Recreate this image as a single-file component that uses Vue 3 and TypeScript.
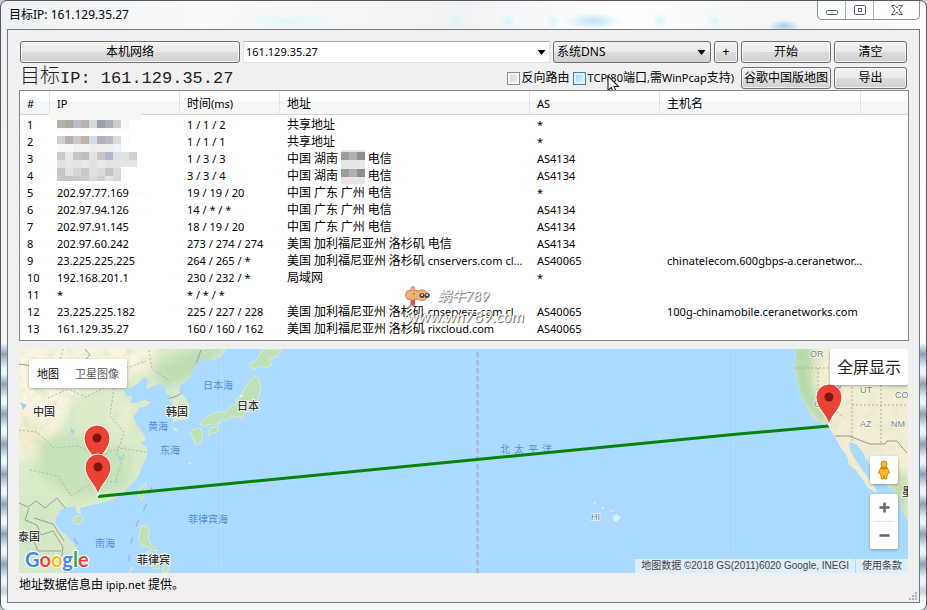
<script setup lang="ts">
import { ref } from 'vue'

interface Band { y: number; h: number; cells: string[] }
interface Hop { ip: string; time: string; address: string; as: string; host: string; mask?: Band[] }

const target = ref('161.129.35.27')
const dns = ref('系统DNS')
const reverse = ref(false)
const tcp = ref(false)

const columns = ['#', 'IP', '时间(ms)', '地址', 'AS', '主机名', '']

const masks: Band[][] = [
  [
    { y: 4, h: 8, cells: ['#b5b3ae', '#a9a8a1', '#bcbcc4', '#b6b4ae', '#d1dbe0', '#9f9fa1', '#a8adb8', '#cccccf', '#f0fafa'] },
    { y: 12, h: 5, cells: ['#fcfcfc', '#fbfbfb', '#fdfdfd', '#fbfbfb', '#fcfcfc', '#fbfbfb', '#fcfcfc', '#fdfdfd', '#fafefe'] },
  ],
  [
    { y: 3, h: 8, cells: ['#cfcfcf', '#b9b0ac', '#c7c7cf', '#bab5a8', '#d3dde5', '#b8b0ae', '#b8bac6', '#dadada', '#f5fcfc'] },
    { y: 11, h: 6, cells: ['#f9f9f9', '#f8f8f8', '#f0f0f0', '#f2f2f2', '#eeeeee', '#ededed', '#eeeeee', '#f3f3f3'] },
  ],
  [
    { y: 0, h: 2, cells: ['#f9f9f9', '#f8f8f8', '#f0f0f0', '#f2f2f2', '#eeeeee', '#ededed', '#eeeeee', '#f3f3f3'] },
    { y: 2, h: 8, cells: ['#c9c9c9', '#e6e8e8', '#c6c4c4', '#c3bfbe', '#e3e3e3', '#c6c6c8', '#b3b9cc', '#dde3e6', '#e0e2e4', '#cfcfcf'] },
    { y: 10, h: 7, cells: ['#e2e2e2', '#e6e6e6', '#e4e4e4', '#e8e8e8', '#e2e2e2', '#e8e8e8', '#e4e4e4', '#e5e5e5', '#e4e4e4', '#e6e6e6'] },
  ],
  [
    { y: 0, h: 1, cells: ['#e2e2e2', '#e6e6e6', '#e4e4e4', '#e8e8e8', '#e2e2e2', '#e8e8e8', '#e4e4e4', '#e5e5e5'] },
    { y: 1, h: 8, cells: ['#c4c4c6', '#e2e2e2', '#d6d6d8', '#c9c9cc', '#e0e0e2', '#dcdcdc', '#c5c5c7', '#dadada'] },
    { y: 9, h: 5, cells: ['#cacacc', '#c6c6c8', '#cacace', '#cdcdcf', '#dadadc', '#cfcfd1', '#e2e2e2', '#d6d6d6'] },
  ],
]

const hops: Hop[] = [
  { ip: '', time: '1 / 1 / 2', address: '共享地址', as: '*', host: '', mask: masks[0] },
  { ip: '', time: '1 / 1 / 1', address: '共享地址', as: '*', host: '', mask: masks[1] },
  { ip: '', time: '1 / 3 / 3', address: '中国 湖南 # 电信', as: 'AS4134', host: '', mask: masks[2] },
  { ip: '', time: '3 / 3 / 4', address: '中国 湖南 # 电信', as: 'AS4134', host: '', mask: masks[3] },
  { ip: '202.97.77.169', time: '19 / 19 / 20', address: '中国 广东 广州 电信', as: '*', host: '' },
  { ip: '202.97.94.126', time: '14 / * / *', address: '中国 广东 广州 电信', as: 'AS4134', host: '' },
  { ip: '202.97.91.145', time: '18 / 19 / 20', address: '中国 广东 广州 电信', as: 'AS4134', host: '' },
  { ip: '202.97.60.242', time: '273 / 274 / 274', address: '美国 加利福尼亚州 洛杉矶 电信', as: 'AS4134', host: '' },
  { ip: '23.225.225.225', time: '264 / 265 / *', address: '美国 加利福尼亚州 洛杉矶 cnservers.com cl...', as: 'AS40065', host: 'chinatelecom.600gbps-a.ceranetwor...' },
  { ip: '192.168.201.1', time: '230 / 232 / *', address: '局域网', as: '*', host: '' },
  { ip: '*', time: '* / * / *', address: '', as: '', host: '' },
  { ip: '23.225.225.182', time: '225 / 227 / 228', address: '美国 加利福尼亚州 洛杉矶 cnservers.com cl...', as: 'AS40065', host: '100g-chinamobile.ceranetworks.com' },
  { ip: '161.129.35.27', time: '160 / 160 / 162', address: '美国 加利福尼亚州 洛杉矶 rixcloud.com', as: 'AS40065', host: '' },
]

// Chinese runs are set one pixel larger than Latin runs; "#" stands for a masked name.
function runs(text: string): { text: string; kind: string }[] {
  return (text.match(/#|[\u4e00-\u9fff]+|[^\u4e00-\u9fff#]+/g) ?? []).map((t) => ({
    text: t,
    kind: t === '#' ? 'mask' : /[\u4e00-\u9fff]/.test(t) ? 'han' : 'latin',
  }))
}

const pins = [
  { x: 97, y: 467 },
  { x: 98, y: 496 },
  { x: 829, y: 426 },
]
</script>

<template>
  <div class="window">
    <header class="titlebar">
      <h1 class="title"><span class="han">目标</span>IP: 161.129.35.27</h1>
      <div class="caption-buttons">
        <button type="button" aria-label="最小化">
          <svg width="14" height="12" viewBox="0 0 14 12"><rect x="1.500" y="6.500" width="11" height="4" rx="1" fill="#fff" stroke="#555a66" /></svg>
        </button>
        <button type="button" aria-label="最大化">
          <svg width="14" height="12" viewBox="0 0 14 12"><rect x="1.500" y="1.500" width="11" height="9" rx="1" fill="#fff" stroke="#555a66" /><rect x="5.500" y="4.500" width="3" height="3" fill="#fff" stroke="#555a66" /></svg>
        </button>
        <button type="button" class="close" aria-label="关闭">
          <svg width="14" height="12" viewBox="0 0 14 12"><path d="M1.500 1.500h3.500l2 2.500 2-2.500h3.500l-3.500 4.500 3.500 4.500h-3.500l-2-2.500-2 2.500H1.500L5 6z" fill="#fff" stroke="#555a66" /></svg>
        </button>
      </div>
    </header>

    <main class="client">
      <form class="tools" @submit.prevent>
        <div class="bar">
          <button type="button" class="btn local">本机网络</button>
          <div class="combo">
            <input v-model="target" type="text" aria-label="目标地址" />
            <button type="button" aria-label="历史记录">
              <svg width="9" height="5" viewBox="0 0 9 5"><path d="M0.500 0h8L4.500 5z" fill="#000" /></svg>
            </button>
          </div>
          <div class="select">
            <select v-model="dns" aria-label="DNS">
              <option>系统DNS</option>
            </select>
            <svg class="select-arrow" width="9" height="5" viewBox="0 0 9 5"><path d="M0.500 0h8L4.500 5z" fill="#000" /></svg>
          </div>
          <button type="button" class="btn plus">+</button>
          <button type="submit" class="btn wide">开始</button>
          <button type="button" class="btn narrow">清空</button>
        </div>
        <div class="bar">
          <h2 class="heading"><span>目标</span>IP: 161.129.35.27</h2>
          <label class="check"><input v-model="reverse" type="checkbox" /><span class="han">反向路由</span></label>
          <label class="check hot">
            <input v-model="tcp" type="checkbox" />
            <span>TCP(80<span class="han">端口</span>,<span class="han">需</span>WinPcap<span class="han">支持</span>)</span>
            <svg class="cursor" width="14" height="20" viewBox="0 0 14 20"><path d="M1 1v14.500l3.300-3 2.400 5.500 2.700-1.100-2.400-5.400h4.500z" fill="#fff" stroke="#222" stroke-width="1.100" /></svg>
          </label>
          <button type="button" class="btn wide">谷歌中国版地图</button>
          <button type="button" class="btn narrow">导出</button>
        </div>
      </form>

      <section class="list">
        <table>
          <colgroup>
            <col class="c-no" /><col class="c-ip" /><col class="c-time" /><col class="c-address" /><col class="c-as" /><col class="c-host" /><col />
          </colgroup>
          <thead>
            <tr>
              <th v-for="(c, i) in columns" :key="i" scope="col"><span v-for="(r, k) in (c === '#' ? [{ text: '#', kind: 'latin' }] : runs(c))" :key="k" :class="r.kind">{{ r.text }}</span></th>
            </tr>
          </thead>
          <tbody>
            <tr v-for="(h, i) in hops" :key="i">
              <td>{{ i + 1 }}</td>
              <td>
                <svg v-if="h.mask" class="ip-mask" width="80" height="17" viewBox="0 0 80 17" shape-rendering="crispEdges">
                  <rect v-if="i === 0" x="-8" y="-4" width="92" height="8" fill="#f6f6f6" />
                  <template v-for="(b, n) in h.mask" :key="n">
                    <rect v-for="(c, k) in b.cells" :key="k" :x="k * 8" :y="b.y" width="8" :height="b.h" :fill="c" />
                  </template>
                </svg>
                <template v-else>{{ h.ip }}</template>
              </td>
              <td>{{ h.time }}</td>
              <td class="address"><template v-for="(r, k) in runs(h.address)" :key="k"><svg v-if="r.kind === 'mask'" class="name-mask" width="24" height="17" viewBox="0 0 24 17" shape-rendering="crispEdges"><rect width="24" height="17" fill="#e6e6e6" /><rect y="2" width="8" height="8" fill="#9d9d9f" /><rect x="8" y="2" width="8" height="8" fill="#b0b0b2" /><rect x="16" y="2" width="8" height="8" fill="#8e8e90" /></svg><span v-else :class="r.kind">{{ r.text }}</span></template></td>
              <td>{{ h.as }}</td>
              <td>{{ h.host }}</td>
              <td></td>
            </tr>
          </tbody>
        </table>
        <div class="watermark">
          <svg width="26" height="22" viewBox="0 0 26 22">
            <path d="M7 1q3-1 3 3v14q0 3-3 3t-2-4V4q0-2 2-3z" fill="#e9a3a3" />
            <path d="M6 15h4v4q0 2-2 2t-2-2z" fill="#dc5050" />
            <path d="M2 6q6-2 12 0 2-2 5-1l6 5-5 5q-4 2-7-1-6 2-11 0-3-4 0-8z" fill="#f5b070" stroke="#c98d60" />
            <circle cx="17" cy="10.500" r="2.500" fill="#444" /><circle cx="22" cy="10.500" r="2.500" fill="#444" />
            <circle cx="17" cy="10" r="1" fill="#fff" /><circle cx="22" cy="10" r="1" fill="#fff" /><circle cx="9" cy="9" r="1" fill="#a67b5b" />
          </svg>
          <span class="mark-name">蜗牛789</span>
          <span class="mark-site">www.wn789.com</span>
        </div>
      </section>

      <section class="map">
        <svg class="chart" viewBox="19 349 889 224" preserveAspectRatio="xMidYMid slice">
          <defs>
            <clipPath id="asia"><path d="M19 349H226L222 356 214 360 207 359 198 361 193 369 192 375 186 381 180 385 179 391 185 397 189 404 190 413 186 420 178 420 173 423 172 412 174 406 171 401 167 400 171 396 166 393 166 386 160 384 151 387 146 389 148 379 144 377 140 382 133 387 124 391 126 396 132 396 131 403 136 403 144 400 151 402 147 406 139 408 133 418 137 425 142 431 146 440 141 443 147 448 147 456 142 467 138 477 132 484 124 492 116 498 102 503 92 505 84 507 80 508 81 514 77 513 75 507 69 507 62 509 56 517 55 524 60 530 67 536 74 544 79 552 78 562 70 570 62 573H19z" /></clipPath>
            <clipPath id="america"><path d="M795 349L796 358 794 368 798 380 799 392 804 402 809 412 815 420 823 424 829 428 835 437 841 448 848 458 848 464 856 470 863 480 868 488 877 493 874 486 867 477 861 468 855 459 850 449 849 442 856 444 862 451 868 462 875 474 884 483 892 489 899 499 902 511 908 521V349z" /></clipPath>
            <filter id="soft" x="-20%" y="-20%" width="140%" height="140%"><feGaussianBlur stdDeviation="5" /></filter>
            <filter id="speckle" x="0" y="0" width="100%" height="100%">
              <feTurbulence type="fractalNoise" baseFrequency="0.09" numOctaves="3" seed="4" />
              <feColorMatrix values="0 0 0 0 .62  0 0 0 0 .79  0 0 0 0 .58  2.600 0 0 0 -1.250" />
            </filter>
          </defs>
          <rect x="-400" y="0" width="1800" height="900" fill="#aadaff" />

          <g clip-path="url(#asia)">
            <rect x="19" y="349" width="215" height="224" fill="#dcebca" />
            <g filter="url(#soft)">
              <path d="M0 330H160L150 368 110 385 78 392 60 425 45 452 0 465z" fill="#f9f3df" />
              <path d="M155 365l35-15 40-10-30 35-40 15z" fill="#bddcb2" />
              <path d="M38 440l30-6 30 8 35 10-8 38-50 8-34-20z" fill="#c5e2b8" />
              <path d="M19 500l35 0 10 30 14 40H19z" fill="#d3e8c6" />
              <path d="M110 395l25 12-8 26-20-6z" fill="#e9edd2" />
              <path d="M20 415l25 8-8 26-18 4z" fill="#f3ebc9" />
            </g>
            <rect x="19" y="349" width="215" height="224" filter="url(#speckle)" opacity=".65" />
            <g fill="none" stroke="#adb3a5" stroke-width="1" stroke-dasharray="2 2">
              <path d="M48 398l20-9 18 8 24-12 14-16 22-8" /><path d="M19 430l18 2 17 16 23-2 25 10 16-8 28 4" />
              <path d="M63 349l-4 15 12 10M114 388l-4 28 14 16-8 24" /><path d="M30 470l28 6 13 20 26-16 18 2 9-27" /><path d="M149 350l3 19 18 12" />
            </g>
            <g fill="none" stroke="#9aa095" stroke-width="1"><path d="M85 349l5 6-8 8-35 5-28-4M19 503l9 4 8-6 9 7 12-10 9 11" /><path d="M29 508l-4 12 12 5 4 10 12-4 10 16-2 15M34 518l19 6 11 17M19 535l14 4 5 12h23M167 399l10-3 7-5M201 350l-5 14" /></g>
            <path d="M20 402l7 3-4 5zM70 428l5 3-3 4zM118 455l5 3-4 3zM115 478l4 3-3 2z" fill="#9fd2f5" />
          </g>
          <g fill="#bfe0b4" stroke="#d8ebcc" stroke-width="1">
            <path d="M263 349l18 1-4 7-8 2 3 5-5 4-8-2-5 4-5-6 7-3 3-5z" />
            <path d="M254 376l4 2 3 8-2 10-4 14-6 3-2-4-5 9-9-2-6 5-5-3-3 6-7 0-7 2-6-2 9-8 9-4 9 0 4-5 6-3 1-6 5-4 5-9z" />
            <path d="M210 428l7-2 2 5-7 3-4 1z" /><path d="M194 429l6-1 3 5-2 9-5 4-3-8-3-5z" />
            <path d="M142 485l4-2-1 8-3 10-4-7z" /><path d="M74 517l6-2 4 4-6 6-5-2z" />
            <path d="M141 526l5-1 3 6-1 8 4 7 6 5-7-1-4-4-5 1-4-9 2-4z" />
            <path d="M148 551l5 3-2 5-4-3zM159 553l6 3-2 6-5-3zM152 562l8 2-2 5-6-1zM133 567l-6 6h3zM165 565l4 2-2 6-5-1z" />
          </g>
          <path d="M174 429l3 1M189 463l2 1M240 397l3-2" stroke="#e4f0df" stroke-width="2" />

          <g clip-path="url(#america)">
            <rect x="790" y="349" width="118" height="180" fill="#f2edd3" />
            <g filter="url(#soft)">
              <path d="M788 345h27l-4 38 10 20 10 20-12 2-24-32z" fill="#b4d8a9" />
              <path d="M871 345h37v45l-20-2z" fill="#d8e8c4" /><path d="M885 465l23 12v50l-14-22z" fill="#bfdeb0" />
            </g>
            <rect x="790" y="349" width="118" height="180" filter="url(#speckle)" opacity=".4" />
            <g fill="none" stroke="#b1ab9d" stroke-dasharray="2 2"><path d="M795 368h57v85M818 368v25l26 25M852 405h56M881 349v94M852 368h56" /></g>
            <path d="M835 436l14 0 21 8h15l2-3h10l10 12" fill="none" stroke="#98988c" />
          </g>
          <g fill="#d9edff"><path d="M592 503l4-1v2zM601 506l4 2-3 1zM610 510l5 1-4 1zM613 516l4-2 4 4-5 4-3-2z" /></g>

          <g fill="none" stroke="#a9b7d8" stroke-width="1.500" stroke-dasharray="7 11"><path d="M152 487q-6 20-14 35-10 22-9 50" /><path d="M74 538l6 10" /></g>
          <path d="M477.500 0V900" stroke="#aebdd6" stroke-width="3" stroke-dasharray="5 3" />
          <path d="M221.500 0V900M733.500 0V900" stroke="#b5dffd" stroke-width="1" />

          <g class="sea">
            <text x="203" y="389">日本海</text><text x="148" y="430">黄海</text><text x="160" y="454">东海</text>
            <text x="188" y="523">菲律宾海</text><text x="95" y="547">南海</text>
            <text x="500" y="453">北</text><text x="514" y="453">太</text><text x="528" y="453">平</text><text x="542" y="453">洋</text>
          </g>
          <g class="land">
            <text x="33" y="416">中国</text><text x="166" y="416">韩国</text><text x="237" y="410">日本</text>
            <text x="18" y="541">泰国</text><text x="137" y="564">菲律宾</text><text x="902" y="496">墨</text>
          </g>
          <g class="state">
            <text x="810" y="357">OR</text><text x="860" y="393">UT</text><text x="895" y="398">CO</text><text x="860" y="427">AZ</text>
            <text x="891" y="427">NM</text><text x="814" y="407">CA</text><text x="830" y="389">NV</text><text x="591" y="520">HI</text>
          </g>

          <path d="M98 496.500L733 434.500 829 426" fill="none" stroke="#078307" stroke-width="3" />
          <g v-for="(p, i) in pins" :key="i" :transform="`translate(${p.x} ${p.y})`">
            <path d="M0 0C-1-11-13-17-13-29A13 13 0 0 1 13-29C13-17 1-11 0 0z" fill="#ea4335" stroke="#fff" stroke-width="1" />
            <circle cy="-29" r="4.500" fill="#811411" />
          </g>
          <text class="google" x="25" y="567"><tspan fill="#4285f4">G</tspan><tspan fill="#ea4335">o</tspan><tspan fill="#fbbc05">o</tspan><tspan fill="#4285f4">g</tspan><tspan fill="#34a853">l</tspan><tspan fill="#ea4335">e</tspan></text>
        </svg>

        <div class="types">
          <button type="button" class="current">地图</button>
          <button type="button">卫星图像</button>
        </div>
        <button type="button" class="full">全屏显示</button>
        <div class="side">
          <button type="button" class="pegman" aria-label="街景">
            <svg width="14" height="20" viewBox="0 0 14 20"><path d="M4 7h6l2.500 6-2 .5L9.500 19h-2L7 15l-.5 4h-2l-1-5.500-2-.5z" fill="#fbb829" stroke="#d18a16" /><circle cx="7" cy="4" r="3" fill="#fbb829" stroke="#d18a16" /><path d="M4 8q3 2 6 0" fill="none" stroke="#b97509" /></svg>
          </button>
          <div class="zoom">
            <button type="button" aria-label="放大"><svg width="11" height="11" viewBox="0 0 11 11"><path d="M5.500 0.500v10M0.500 5.500h10" stroke="#666" stroke-width="2.500" /></svg></button>
            <button type="button" aria-label="缩小"><svg width="11" height="11" viewBox="0 0 11 11"><path d="M0.500 5.500h10" stroke="#666" stroke-width="2.500" /></svg></button>
          </div>
        </div>
        <div class="credits">
          <span>地图数据 ©2018 GS(2011)6020 Google, INEGI</span>
          <a href="#">使用条款</a>
        </div>
      </section>

      <footer class="status">
        <span><span class="han">地址数据信息由</span> ipip.net <span class="han">提供。</span></span>
        <svg width="10" height="10" viewBox="0 0 10 10" fill="#b4b4b4"><path d="M7 1h2v2H7zM7 4h2v2H7zM4 4h2v2H4zM7 7h2v2H7zM4 7h2v2H4zM1 7h2v2H1z" /></svg>
      </footer>
    </main>
  </div>
</template>

<style>
html, body { background: #c9cdd2; }
</style>

<style scoped>
* { box-sizing: border-box; }
button, input, select { font: inherit; color: inherit; margin: 0; }
h1, h2 { margin: 0; font-weight: 400; }

.window {
  display: flex;
  flex-direction: column;
  min-height: 100vh;
  padding: 0 6px 7px;
  border: 1px solid #55585e;
  border-radius: 7px;
  font: 11px/16px "Noto Sans", "Noto Sans CJK SC", sans-serif;
  color: #000;
  background:
    radial-gradient(ellipse 50px 8px at 285px 20px, #dcf6fb 0, transparent 100%),
    radial-gradient(circle 8px at 455px 20px, #d8f5fa 0, transparent 100%),
    radial-gradient(circle 8px at 507px 20px, #d8f5fa 0, transparent 100%),
    radial-gradient(circle 8px at 552px 20px, #d8f5fa 0, transparent 100%),
    radial-gradient(ellipse 30px 8px at 592px 20px, #bfe1fb 0, transparent 100%),
    radial-gradient(circle 8px at 659px 20px, #d8f5fa 0, transparent 100%),
    radial-gradient(circle 8px at 713px 20px, #d8f5fa 0, transparent 100%),
    radial-gradient(ellipse 16px 6px at 783px 25px, #a8cdec 0, transparent 100%),
    linear-gradient(transparent 96%, #f4fbfb 98%),
    repeating-linear-gradient(#e8f6fb 0, #8fa2b8 10px, #a9bccd 14px, #e8f6fb 24px, #e8f6fb 30px) 0 343px / 100% 100% no-repeat,
    linear-gradient(100deg, #eef1f3, #fafafa 20%, #f1f2f4 45%, #fff 60%, #f3f5f6 75%, #fff);
}

.titlebar { display: flex; justify-content: space-between; align-items: flex-start; height: 28px; }
.title { padding: 5px 0 0 2px; font-size: 12px; line-height: 18px; }
.caption-buttons {
  display: flex;
  border: 1px solid #8c9096;
  border-top: 0;
  border-radius: 0 0 5px 5px;
  background: #ffffffb0;
}
.caption-buttons button {
  display: flex; align-items: center; justify-content: center;
  width: 28px; height: 18px; padding: 0; border: 0; border-right: 1px solid #a8acb2; background: none;
}
.caption-buttons .close { width: 45px; border-right: 0; }

.client {
  display: flex;
  flex: 1;
  flex-direction: column;
  padding: 11px 10px 5px 11px;
  border: 1px solid #74777c;
  background: #f0f0f0;
}
.han { font-size: 12px; }

.tools { display: flex; flex-direction: column; gap: 4px; padding: 0 2px 1px 1px; }
.bar { display: flex; align-items: center; gap: 3px; height: 22px; }
.btn {
  height: 22px; padding: 0; border: 1px solid #707070; border-radius: 3px;
  background: linear-gradient(#f2f2f2 0, #ebebeb 48%, #dddddd 52%, #cfcfcf 100%);
  box-shadow: inset 0 0 0 1px #fafafacc;
  font-size: 12px; line-height: 18px; white-space: nowrap;
}
.local { width: 220px; }
.plus { width: 24px; }
.wide { width: 90px; }
.narrow { width: 73px; }
.combo { display: flex; flex: 1; min-width: 0; height: 22px; border: 1px solid #e3e3e3; border-top-color: #abadb3; background: #fff; }
.combo input { flex: 1; min-width: 0; padding: 0 2px; border: 0; outline: 0; background: none; }
.combo button { width: 16px; padding: 0; border: 0; background: none; line-height: 5px; }
.combo svg { vertical-align: middle; }
.select { display: flex; align-items: center; justify-content: flex-end; width: 158px; position: relative; }
.select select {
  width: 100%; height: 22px; padding: 0 3px; border: 1px solid #707070; border-radius: 3px; appearance: none;
  background: linear-gradient(#f2f2f2 0, #ebebeb 48%, #dddddd 52%, #cfcfcf 100%); font-size: 12px;
}
.select-arrow { position: absolute; right: 5px; pointer-events: none; }

.heading { flex: 1; font-family: "Liberation Mono", "Noto Sans CJK SC", monospace; font-size: 17px; line-height: 22px; color: #222; white-space: pre; }
.heading span { font-size: 20px; font-weight: 300; }
.check { position: relative; display: flex; align-items: center; gap: 2px; white-space: nowrap; }
.check.hot { padding-right: 4px; }
.check input {
  width: 13px; height: 13px; appearance: none; border: 1px solid #8e8f8f;
  background: linear-gradient(135deg, #cfd3d6, #f6f6f6); box-shadow: inset 0 0 0 2px #f4f4f4;
}
.check.hot input { border-color: #3c7fb1; background: linear-gradient(135deg, #9ed3f7, #e6f6fd); box-shadow: inset 0 0 0 2px #def2fc; }
.cursor { position: absolute; left: 34px; top: 5px; }

.list { position: relative; padding-bottom: 3px; border: 1px solid #828790; background: #fff; }
table { width: 100%; table-layout: fixed; border-collapse: separate; border-spacing: 0; }
.c-no { width: 30px; }
.c-ip { width: 130px; }
.c-time { width: 100px; }
.c-address { width: 250px; }
.c-as { width: 130px; }
.c-host { width: 201px; }
th {
  height: 24px; padding: 3px 0 0 7px; border-right: 1px solid #e2e3e5; border-bottom: 1px solid #d5d5d5;
  background: linear-gradient(#fff 0, #fff 40%, #f6f7f8 44%, #f3f4f5 100%); font-weight: 400; text-align: left; line-height: 16px;
}
th:last-child { border-right: 0; }
td { height: 17px; padding: 0 0 0 7px; line-height: 17px; white-space: pre; }
tbody tr:first-child td { height: 18px; padding-top: 1px; }
td span { line-height: 16px; }
.ip-mask { display: block; overflow: visible; }
.name-mask { vertical-align: top; }

.watermark {
  position: absolute; left: 385px; top: 194px; display: grid; grid-template-columns: 26px auto; column-gap: 6px; align-items: center;
  color: #fff; font: italic 14px/18px "Lato", "Noto Sans CJK SC", sans-serif; text-shadow: 1px 1px 1px #555;
}
.mark-site { grid-column: 1 / 3; padding-left: 2px; font-size: 16px; line-height: 18px; }

.map { position: relative; flex: 1; min-height: 224px; margin: 8px 1px 0 0; overflow: hidden; background: #aadaff; }
.chart { position: absolute; inset: 0; width: 100%; height: 100%; font-family: "Noto Sans", "Noto Sans CJK SC", sans-serif; }
.sea { font-size: 10px; fill: #5b8fd0; }
.land { font-size: 11px; font-weight: 500; fill: #333; stroke: #ffffffcc; stroke-width: 2px; paint-order: stroke; }
.state { font-family: "Liberation Sans", sans-serif; font-size: 9px; fill: #7e8288; stroke: #ffffff99; stroke-width: 2px; paint-order: stroke; }
.google { font-family: "Lato", sans-serif; font-size: 20px; font-weight: 700; stroke: #fff; stroke-width: 2px; paint-order: stroke; }
.types, .full, .pegman, .zoom { border: 0; border-radius: 2px; background: #fff; box-shadow: 0 1px 3px #0000004d; }
.types { position: absolute; left: 10px; top: 10px; display: flex; height: 29px; }
.types button { padding: 0 8px; border: 0; background: none; color: #565656; }
.types .current { color: #000; }
.full { position: absolute; right: 0; top: 0; height: 36px; padding: 0 7px; font-size: 16px; line-height: 24px; color: #222; }
.side { position: absolute; right: 10px; bottom: 24px; display: flex; flex-direction: column; gap: 10px; width: 28px; }
.pegman { display: flex; align-items: center; justify-content: center; height: 28px; padding: 0; }
.zoom { display: flex; flex-direction: column; padding: 0 4px; }
.zoom button { display: flex; align-items: center; justify-content: center; height: 27px; padding: 0; border: 0; background: none; }
.zoom button + button { height: 28px; border-top: 1px solid #e6e6e6; }
.credits { position: absolute; right: 0; bottom: 0; display: flex; gap: 1px; font: 10px/14px "Liberation Sans", "Noto Sans CJK SC", sans-serif; color: #444; }
.credits > * { padding: 0 6px; background: #f5f5f5b3; color: #444; text-decoration: none; white-space: nowrap; }

.status { display: flex; justify-content: space-between; align-items: flex-end; height: 24px; line-height: 24px; }
.status svg { margin-right: -9px; margin-bottom: -4px; }
</style>
